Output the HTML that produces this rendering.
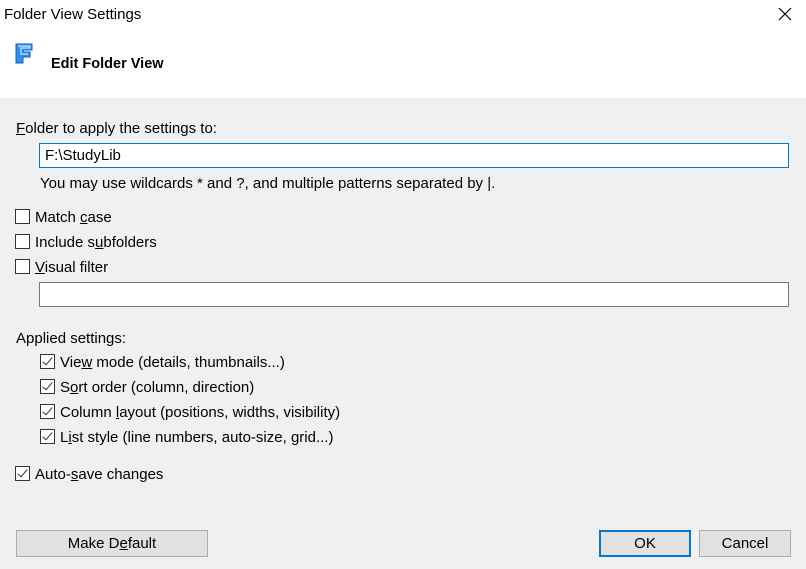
<!DOCTYPE html>
<html><head><style>
*{margin:0;padding:0;box-sizing:border-box}
body{width:806px;height:569px;background:#f0f0f0;font-family:"Liberation Sans",sans-serif;font-size:15px;color:#000;position:relative;overflow:hidden}
.a{position:absolute;white-space:nowrap;line-height:18px}
.hdr{position:absolute;left:0;top:0;width:806px;height:98px;background:#fff}
.cb{position:absolute;width:15px;height:15px;border:1px solid #333;background:#fff}
.cb.c::after{content:"";position:absolute;left:4px;top:0px;width:4px;height:9px;border:solid #333;border-width:0 1.5px 1.5px 0;transform:rotate(40deg)}
.in{position:absolute;background:#fff;border:1px solid #7a7a7a;height:25px}
.btn{position:absolute;height:27px;background:#e1e1e1;border:1px solid #adadad;text-align:center;line-height:26px}
u{text-decoration:underline}
</style></head><body>
<div class="hdr"></div>
<div class="a" style="left:4px;top:6px">Folder View Settings</div>
<svg class="a" style="left:778px;top:7px" width="14" height="14" viewBox="0 0 14 14"><path d="M1 1L13 13M13 1L1 13" stroke="#000" stroke-width="1.2"/></svg>
<svg class="a" style="left:15px;top:43px" width="20" height="22" viewBox="0 0 20 22"><path d="M1 1h16v6H8v2h7v5H8v6H1z" fill="#2d8ff0" stroke="#1060c0" stroke-width="1"/><path d="M3 3h12v2H6v6h7" fill="none" stroke="#cfe6ff" stroke-width="1.2"/></svg>
<div class="a" style="left:51px;top:55px;font-weight:bold;font-size:14.5px">Edit Folder View</div>
<div class="a" style="left:16px;top:120px"><u>F</u>older to apply the settings to:</div>
<div class="in" style="left:39px;top:143px;width:750px;border-color:#0078d7;padding-left:5px;line-height:24px">F:\StudyLib</div>
<div class="a" style="left:40px;top:175px">You may use wildcards * and ?, and multiple patterns separated by |.</div>
<div class="cb" style="left:15px;top:209px"></div><div class="a" style="left:35px;top:209px">Match <u>c</u>ase</div>
<div class="cb" style="left:15px;top:234px"></div><div class="a" style="left:35px;top:234px">Include s<u>u</u>bfolders</div>
<div class="cb" style="left:15px;top:259px"></div><div class="a" style="left:35px;top:259px"><u>V</u>isual filter</div>
<div class="in" style="left:39px;top:282px;width:750px"></div>
<div class="a" style="left:16px;top:330px">Applied settings:</div>
<div class="cb c" style="left:40px;top:354px"></div><div class="a" style="left:60px;top:354px">Vie<u>w</u> mode (details, thumbnails...)</div>
<div class="cb c" style="left:40px;top:379px"></div><div class="a" style="left:60px;top:379px">S<u>o</u>rt order (column, direction)</div>
<div class="cb c" style="left:40px;top:404px"></div><div class="a" style="left:60px;top:404px">Column <u>l</u>ayout (positions, widths, visibility)</div>
<div class="cb c" style="left:40px;top:429px"></div><div class="a" style="left:60px;top:429px">L<u>i</u>st style (line numbers, auto-size, grid...)</div>
<div class="cb c" style="left:15px;top:466px"></div><div class="a" style="left:35px;top:466px">Auto-<u>s</u>ave changes</div>
<div class="btn" style="left:16px;top:530px;width:192px">Make D<u>e</u>fault</div>
<div class="btn" style="left:599px;top:530px;width:92px;border:2px solid #0078d7;line-height:24px">OK</div>
<div class="btn" style="left:699px;top:530px;width:92px">Cancel</div>
</body></html>
